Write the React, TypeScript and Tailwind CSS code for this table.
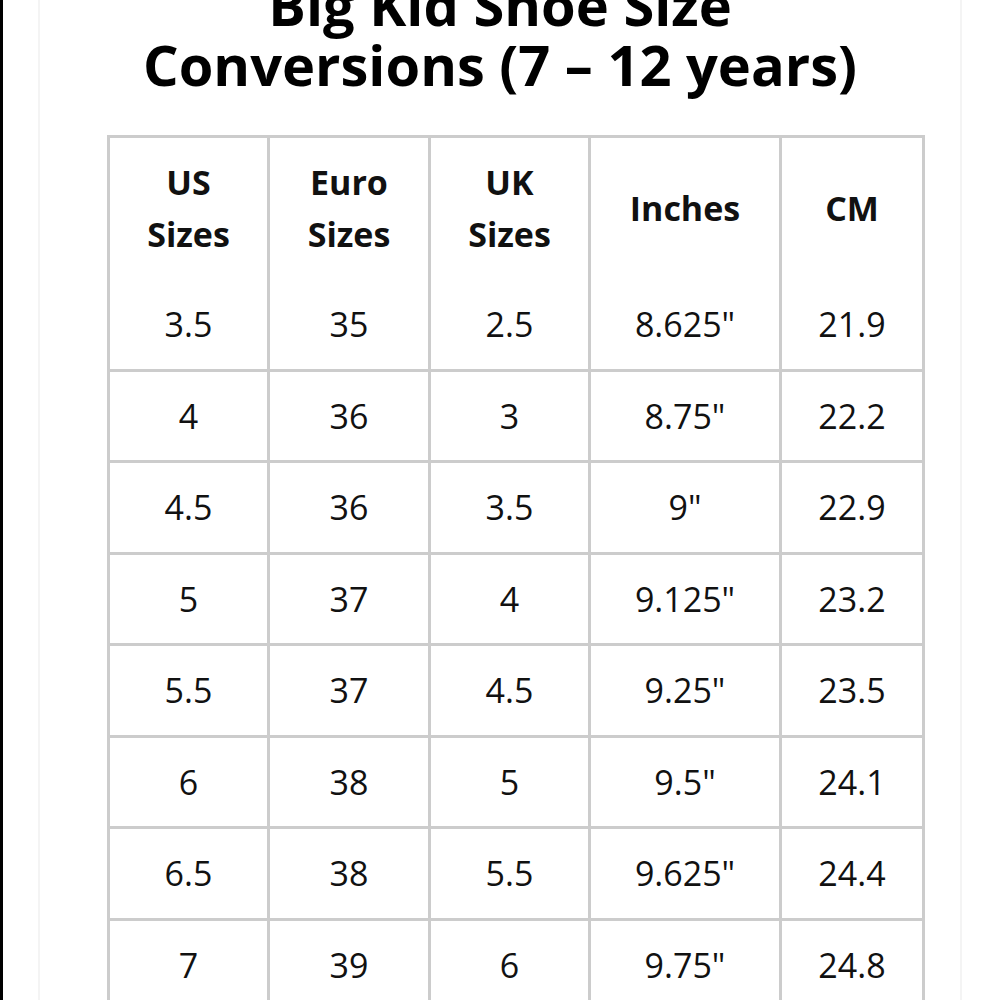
const rows = [
  ["3.5", "35", "2.5", '8.625"', "21.9"],
  ["4", "36", "3", '8.75"', "22.2"],
  ["4.5", "36", "3.5", '9"', "22.9"],
  ["5", "37", "4", '9.125"', "23.2"],
  ["5.5", "37", "4.5", '9.25"', "23.5"],
  ["6", "38", "5", '9.5"', "24.1"],
  ["6.5", "38", "5.5", '9.625"', "24.4"],
  ["7", "39", "6", '9.75"', "24.8"],
];

export default function App() {
  return (
    <div
      className="flex h-[1000px] w-[1000px] overflow-hidden bg-white text-[#111]"
      style={{ fontFamily: '"Open Sans", sans-serif' }}
    >
      <div className="h-full w-[3px] shrink-0 bg-black" />
      <div className="ml-[35px] flex h-full w-[924px] shrink-0 flex-col border-x-2 border-[#f4f4f4]">
        <h1 className="mt-[-26px] text-center text-[56px] font-bold leading-[60px] text-black">
          Big Kid Shoe Size
          <br />
          Conversions (7 – 12 years)
        </h1>

        <table className="ml-[67px] mt-[41px] w-[815px] table-fixed border-collapse text-center text-[34px] leading-[52px]">
          <colgroup>
            <col className="w-[160px]" />
            <col className="w-[161px]" />
            <col className="w-[160px]" />
            <col className="w-[191px]" />
            <col className="w-[143px]" />
          </colgroup>
          <thead>
            <tr className="h-[142px] font-bold">
              <th className="border-[3px] border-b-0 border-[#cccccc] px-2">US<br />Sizes</th>
              <th className="border-[3px] border-b-0 border-[#cccccc] px-2">Euro<br />Sizes</th>
              <th className="border-[3px] border-b-0 border-[#cccccc] px-2">UK<br />Sizes</th>
              <th className="border-[3px] border-b-0 border-[#cccccc] px-2">Inches</th>
              <th className="border-[3px] border-b-0 border-[#cccccc] px-2">CM</th>
            </tr>
          </thead>
          <tbody>
            {rows.map((r, i) => (
              <tr key={i} className="h-[91.5px]">
                {r.map((c, j) => (
                  <td
                    key={j}
                    className={
                      i === 0
                        ? "border-[3px] border-t-0 border-[#cccccc] px-2"
                        : "border-[3px] border-[#cccccc] px-2"
                    }
                  >
                    {c}
                  </td>
                ))}
              </tr>
            ))}
          </tbody>
        </table>
      </div>
    </div>
  );
}
